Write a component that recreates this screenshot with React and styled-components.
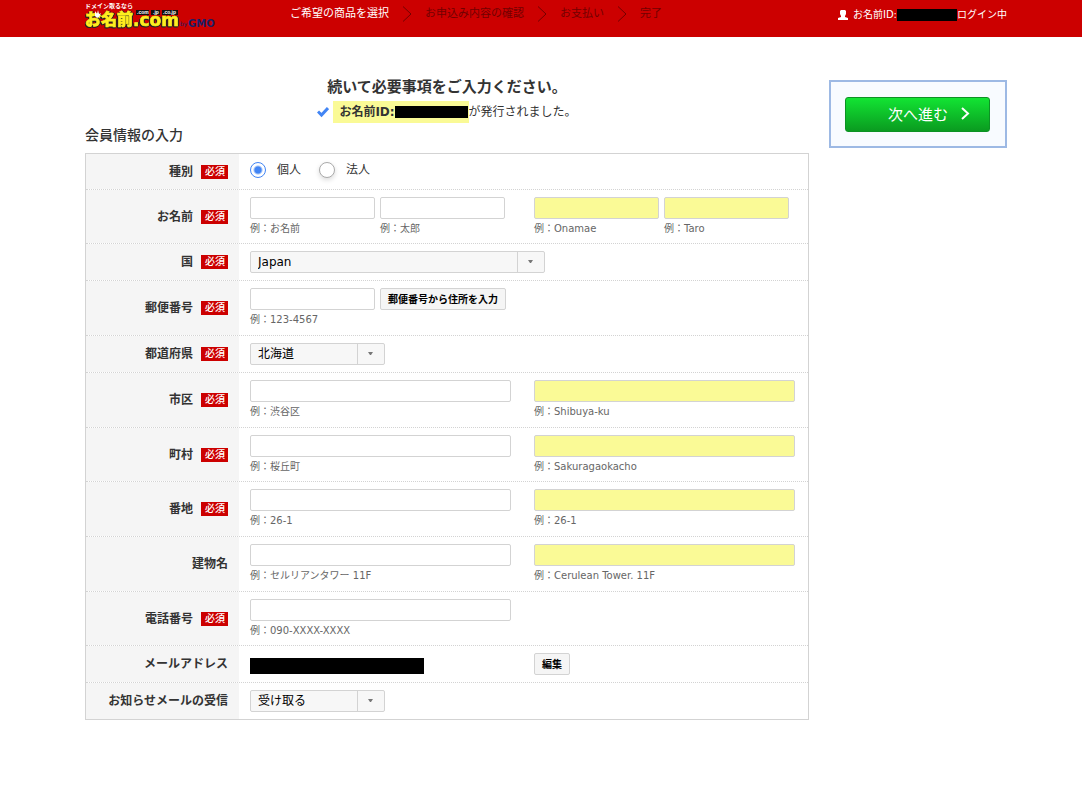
import React, { useState } from "react";
import styled, { createGlobalStyle, css } from "styled-components";

const GlobalStyle = createGlobalStyle`
  * {
    box-sizing: border-box;
  }
  body {
    margin: 0;
    background: #fff;
    color: #333;
    font-family: "DejaVu Sans", "Noto Sans CJK JP", sans-serif;
    font-size: 12px;
    line-height: 18px;
  }
  input, select, button {
    font-family: inherit;
    margin: 0;
  }
`;

const Header = styled.header`
  display: flex;
  justify-content: space-between;
  height: 37px;
  padding: 0 75px 0 85px;
  background: #c00;
  color: #fff;
`;
const LogoLink = styled.a`
  display: block;
  width: 134px;
  height: 32px;
`;
const LogoName = styled.g`
  fill: #ffee1f;
  stroke: #ffee1f;
  stroke-width: 0.6px;
  font-weight: 900;
  filter: drop-shadow(1px 0 0 #222) drop-shadow(-1px 1px 0 #222);
`;
const Steps = styled.ol`
  display: flex;
  flex: 1;
  align-items: center;
  gap: 13px;
  height: 28px;
  margin: 0;
  padding: 0 0 0 71px;
  list-style: none;
  font-size: 11px;
`;
const Step = styled.li`
  display: flex;
  align-items: center;
  gap: 13px;
  white-space: nowrap;
  color: ${(props) => (props.$active ? "#fff" : "#720000")};
`;
const Login = styled.div`
  display: flex;
  align-items: center;
  height: 30px;
  font-size: 10px;
  white-space: nowrap;

  svg {
    margin-right: 5px;
  }
`;
const Mask = styled.span`
  display: inline-block;
  width: ${(props) => props.$width}px;
  height: ${(props) => props.$height}px;
  background: #000;
`;
const MailMask = styled(Mask)`
  margin-top: 5px;
`;

const Page = styled.div`
  display: flex;
  align-items: flex-start;
  gap: 20px;
  padding: 36px 75px 60px 85px;
`;
const Main = styled.main`
  flex: 1;
  min-width: 0;
`;
const Title = styled.h1`
  margin: 0;
  padding-top: 3px;
  text-align: center;
  font-size: 15px;
  line-height: 22px;
`;
const Issued = styled.p`
  display: flex;
  justify-content: center;
  align-items: center;
  gap: 4px;
  height: 24px;
  margin: 2px 0 0;
`;
const IssuedId = styled.strong`
  display: flex;
  align-items: center;
  height: 22px;
  padding: 0 1px 0 6px;
  background: #fafa96;
`;
const IssuedText = styled.span`
  display: flex;
  align-items: center;
`;
const SectionTitle = styled.h2`
  margin: 1px 0 8px;
  font-size: 14px;
  font-weight: 500;
  line-height: 20px;
`;

const Form = styled.form`
  border: 1px solid #d3d3d3;
`;
const Row = styled.div`
  display: flex;
  min-height: ${(props) => props.$height}px;

  & + & {
    border-top: 1px dotted #d3d3d3;
  }
`;
const RowLabel = styled.div`
  display: flex;
  flex: 0 0 153px;
  align-items: center;
  justify-content: flex-end;
  gap: 8px;
  padding-right: 11px;
  background: #f5f5f5;
  font-weight: bold;
`;
const Required = styled.span`
  padding: 0 3px 0 4px;
  background: #c00;
  color: #fff;
  font-size: 10px;
  font-weight: 500;
  line-height: 14px;
`;
const RowBody = styled.div`
  display: flex;
  flex: 1;
  padding: 7px 0 0 11px;
`;
const Column = styled.div`
  display: flex;
  align-items: flex-start;
  gap: 5px;
  flex: ${(props) => (props.$last ? "1" : "0 0 284px")};
`;
const Radios = styled.div`
  display: flex;
  gap: 18px;
`;
const RadioLabel = styled.label`
  display: flex;
  align-items: center;
  gap: 11px;
  height: 18px;
`;
const Radio = styled.input`
  appearance: none;
  width: 16px;
  height: 16px;
  border: 1px solid #aaa;
  border-radius: 50%;
  background: #fff;
  box-shadow: 0 2px 5px rgba(0, 0, 0, 0.15);

  &:checked {
    border-color: #4285f4;
    background: radial-gradient(circle, #4285f4 3px, #fff 5px);
    box-shadow: none;
  }
`;
const Field = styled.label`
  display: flex;
  flex-direction: column;
  width: ${(props) => (props.$wide ? 261 : 125)}px;
`;
const control = css`
  height: 22px;
  border: 1px solid #d3d3d3;
  border-radius: 2px;
`;
const TextInput = styled.input`
  ${control}
  width: 100%;
  padding: 0 6px;
  background: ${(props) => (props.$roman ? "#fafa96" : "#fff")};
  font-size: 12px;
`;
const Note = styled.span`
  color: #666;
  font-size: 10px;
  line-height: 20px;
  white-space: nowrap;
`;
const SelectBox = styled.div`
  position: relative;
  width: ${(props) => (props.$wide ? 295 : 135)}px;
  height: 22px;

  svg {
    position: absolute;
    top: 9px;
    right: 12px;
    pointer-events: none;
  }
`;
const Select = styled.select`
  ${control}
  appearance: none;
  width: 100%;
  padding: 0 30px 0 7px;
  background: linear-gradient(#d3d3d3, #d3d3d3) right 26px top / 1px 100% no-repeat #f7f7f7;
  color: #000;
  font-size: 12px;
`;
const SmallButton = styled.button`
  ${control}
  padding: 0 7px 2px;
  background: #f5f5f5;
  color: #000;
  font-size: 10px;
  font-weight: bold;
  white-space: nowrap;
`;

const Side = styled.aside`
  flex: 0 0 178px;
  margin-top: 7px;
  padding: 15px 15px 14px 14px;
  border: 2px solid #9db9e4;
  background: #f8fbff;
`;
const NextButton = styled.button`
  display: flex;
  align-items: center;
  justify-content: flex-end;
  gap: 13px;
  width: 100%;
  height: 35px;
  padding: 0 19px 2px;
  border: 1px solid #0c9224;
  border-radius: 3px;
  background: linear-gradient(#12e433, #0a9b20);
  color: #fff;
  font-size: 15px;
`;

const Logo = () => (
  <svg width="134" height="32" viewBox="0 0 134 32" aria-hidden="true">
    <text x="0" y="8" fontSize="6" fontWeight="700" fill="#fff" fontFamily="Noto Sans CJK JP">
      ドメイン取るなら
    </text>
    <LogoName>
      <text x="0" y="25" fontSize="16" fontFamily="Noto Sans CJK JP">お名前</text>
      <text x="48" y="26" fontSize="17" fontFamily="DejaVu Sans">.com</text>
    </LogoName>
    <path d="M10 11l2 3 1-4 1 4 2-1-2 4-2 1-2-2z" fill="#fff" />
    <path d="M51 10h13v5h-13zM66 10h9v5h-9zM77 10h16v5h-16z" fill="#111" />
    <g fill="#fff" fontSize="5" fontWeight="700" fontFamily="Liberation Sans">
      <text x="52" y="14">.com</text>
      <text x="68" y="14">.jp</text>
      <text x="78" y="14">.co.jp</text>
    </g>
    <g fill="#1a1f66" fontFamily="DejaVu Sans">
      <text x="95" y="26" fontSize="6">by</text>
      <text x="103" y="27" fontSize="10" fontWeight="700">GMO</text>
    </g>
  </svg>
);

const StepArrow = () => (
  <svg width="10" height="16" viewBox="0 0 10 16" fill="none" stroke="#720000" aria-hidden="true">
    <path d="M1 0.500l8 7.500-8 7.500" />
  </svg>
);

const UserIcon = () => (
  <svg width="10" height="10" viewBox="0 0 10 10" fill="#fff" aria-hidden="true">
    <path d="M3 0h4l1 1v3L7 6v1l3 1v2H0V8l3-1V6L2 4V1z" />
  </svg>
);

const CheckIcon = () => (
  <svg width="12" height="12" viewBox="0 0 12 12" aria-hidden="true">
    <path d="M1 5.500l3.500 3.500L11 2" fill="none" stroke="#4285f4" strokeWidth="3" />
  </svg>
);

const NextArrow = () => (
  <svg width="9" height="13" viewBox="0 0 9 13" fill="none" stroke="#fff" strokeWidth="2" aria-hidden="true">
    <path d="M1 1l6 5.500-6 5.500" />
  </svg>
);

const Example = ({ text, wide, roman, label }) => (
  <Field $wide={wide}>
    <TextInput type="text" $roman={roman} aria-label={label} />
    <Note>例：{text}</Note>
  </Field>
);

const Choice = ({ options, wide, label }) => (
  <SelectBox $wide={wide}>
    <Select aria-label={label}>
      {options.map((option) => (
        <option key={option}>{option}</option>
      ))}
    </Select>
    <svg width="5" height="4" viewBox="0 0 5 4" fill="#777" aria-hidden="true">
      <path d="M0 0h5L3 3H2z" />
    </svg>
  </SelectBox>
);

const FormRow = ({ label, required, height, children }) => (
  <Row $height={height}>
    <RowLabel>
      {label}
      {required && <Required>必須</Required>}
    </RowLabel>
    <RowBody>{children}</RowBody>
  </Row>
);

const addressRows = [
  { label: "市区", required: true, height: 55, local: "渋谷区", roman: "Shibuya-ku" },
  { label: "町村", required: true, height: 54, local: "桜丘町", roman: "Sakuragaokacho" },
  { label: "番地", required: true, height: 55, local: "26-1", roman: "26-1" },
  { label: "建物名", required: false, height: 55, local: "セルリアンタワー 11F", roman: "Cerulean Tower. 11F" },
];

const steps = ["ご希望の商品を選択", "お申込み内容の確認", "お支払い", "完了"];

const App = () => {
  const [type, setType] = useState("個人");

  return (
    <>
      <GlobalStyle />
      <Header>
        <LogoLink href="#" aria-label="お名前.com">
          <Logo />
        </LogoLink>
        <Steps>
          {steps.map((step, index) => (
            <Step key={step} $active={index === 0}>
              {index > 0 && <StepArrow />}
              {step}
            </Step>
          ))}
        </Steps>
        <Login>
          <UserIcon />
          お名前ID:
          <Mask $width={60} $height={12} />
          ログイン中
        </Login>
      </Header>
      <Page>
        <Main>
          <Title>続いて必要事項をご入力ください。</Title>
          <Issued>
            <CheckIcon />
            <IssuedText>
              <IssuedId>
                お名前ID:
                <Mask $width={73} $height={12} />
              </IssuedId>
              が発行されました。
            </IssuedText>
          </Issued>
          <SectionTitle>会員情報の入力</SectionTitle>
          <Form>
            <FormRow label="種別" required height={35}>
              <Radios>
                {["個人", "法人"].map((name) => (
                  <RadioLabel key={name}>
                    <Radio
                      type="radio"
                      name="type"
                      checked={type === name}
                      onChange={() => setType(name)}
                    />
                    {name}
                  </RadioLabel>
                ))}
              </Radios>
            </FormRow>
            <FormRow label="お名前" required height={54}>
              <Column>
                <Example text="お名前" label="姓" />
                <Example text="太郎" label="名" />
              </Column>
              <Column $last>
                <Example text="Onamae" label="姓（ローマ字）" roman />
                <Example text="Taro" label="名（ローマ字）" roman />
              </Column>
            </FormRow>
            <FormRow label="国" required height={37}>
              <Choice wide label="国" options={["Japan"]} />
            </FormRow>
            <FormRow label="郵便番号" required height={55}>
              <Column>
                <Example text="123-4567" label="郵便番号" />
                <SmallButton type="button">郵便番号から住所を入力</SmallButton>
              </Column>
            </FormRow>
            <FormRow label="都道府県" required height={37}>
              <Choice label="都道府県" options={["北海道"]} />
            </FormRow>
            {addressRows.map((row) => (
              <FormRow key={row.label} label={row.label} required={row.required} height={row.height}>
                <Column>
                  <Example wide text={row.local} label={row.label} />
                </Column>
                <Column $last>
                  <Example wide roman text={row.roman} label={`${row.label}（ローマ字）`} />
                </Column>
              </FormRow>
            ))}
            <FormRow label="電話番号" required height={54}>
              <Column>
                <Example wide text="090-XXXX-XXXX" label="電話番号" />
              </Column>
            </FormRow>
            <FormRow label="メールアドレス" height={37}>
              <Column>
                <MailMask $width={174} $height={16} />
              </Column>
              <Column $last>
                <SmallButton type="button">編集</SmallButton>
              </Column>
            </FormRow>
            <FormRow label="お知らせメールの受信" height={37}>
              <Choice label="お知らせメールの受信" options={["受け取る", "受け取らない"]} />
            </FormRow>
          </Form>
        </Main>
        <Side>
          <NextButton type="button">
            次へ進む
            <NextArrow />
          </NextButton>
        </Side>
      </Page>
    </>
  );
};

export default App;
